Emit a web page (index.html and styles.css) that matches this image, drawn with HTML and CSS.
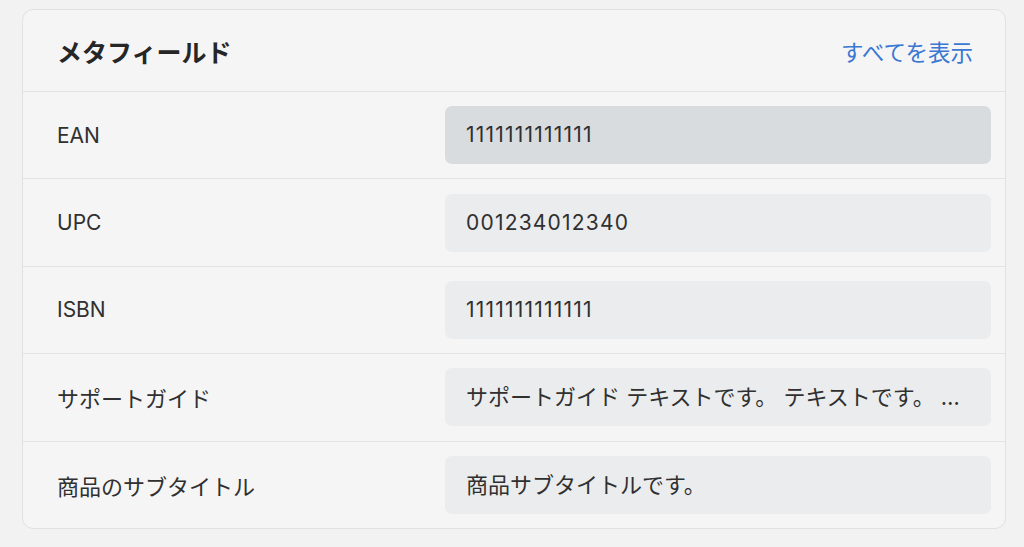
FILE: index.html
```html
<!DOCTYPE html>
<html lang="ja">
<head>
<meta charset="utf-8">
<title>メタフィールド</title>
<link rel="stylesheet" href="styles.css">
</head>
<body>
<section class="card">
  <header class="card-header">
    <h2 class="card-title">メタフィールド</h2>
    <a class="card-link" href="#">すべてを表示</a>
  </header>
  <div class="row">
    <div class="label label-latin">EAN</div>
    <div class="field field-num field-active">1111111111111</div>
  </div>
  <div class="row">
    <div class="label label-latin">UPC</div>
    <div class="field field-num">001234012340</div>
  </div>
  <div class="row">
    <div class="label label-latin">ISBN</div>
    <div class="field field-num">1111111111111</div>
  </div>
  <div class="row">
    <div class="label">サポートガイド</div>
    <div class="field">サポートガイド テキストです。 テキストです。 …</div>
  </div>
  <div class="row">
    <div class="label">商品のサブタイトル</div>
    <div class="field">商品サブタイトルです。</div>
  </div>
</section>
</body>
</html>
```

FILE: styles.css
```css
html, body {
  margin: 0;
  padding: 0;
  background: #f2f2f2;
}

body {
  padding: 9px 18px 0 22px;
  font-family: "Inter", "Noto Sans CJK JP", sans-serif;
  color: #303030;
}

.card {
  width: 984px;
  box-sizing: border-box;
  background: #f5f5f5;
  border: 1px solid #dfe1e3;
  border-radius: 11px;
  overflow: hidden;
}

.card-header {
  display: flex;
  align-items: center;
  justify-content: space-between;
  height: 81px;
  padding: 0 32px 0 34px;
  border-bottom: 1px solid #e0e2e4;
}

.card-title {
  margin: 0;
  font-size: 25px;
  font-weight: 700;
  color: #262626;
}

.card-link {
  font-size: 22.5px;
  color: #3a78d2;
  text-decoration: none;
}

.row {
  display: grid;
  grid-template-columns: 388px 1fr;
  align-items: center;
  padding: 14.2px 14px 14.2px 34px;
  border-top: 1px solid #e3e3e3;
}

.card-header + .row {
  border-top: none;
}

.label {
  font-size: 22px;
  color: #303030;
}

.label-latin {
  font-size: 21px;
}

.field {
  height: 58px;
  line-height: 58px;
  padding: 0 18px 0 21px;
  background: #ebecee;
  border-radius: 7px;
  font-size: 22px;
  color: #303030;
  white-space: nowrap;
  overflow: hidden;
  text-overflow: ellipsis;
}

.field-num {
  font-size: 21px;
  letter-spacing: 1.2px;
}

.field-active {
  background: #d9dcdf;
}
```
